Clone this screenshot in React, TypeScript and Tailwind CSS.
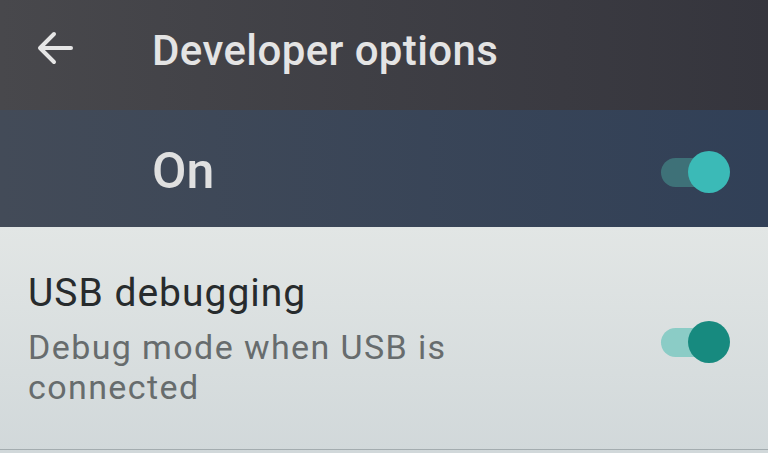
function Toggle({ track, thumb }: { track: string; thumb: string }) {
  return (
    <div className="relative w-[70px] h-[42px] flex items-center">
      <div className={`ml-[1px] w-[50px] h-[29px] rounded-full ${track}`} />
      <div className={`absolute right-0 top-0 w-[42px] h-[42px] rounded-full ${thumb}`} />
    </div>
  )
}

export default function App() {
  return (
    <div
      className="w-[768px] h-[453px] flex flex-col overflow-hidden bg-[#d9dfdf]"
      style={{ fontFamily: 'Roboto, "Liberation Sans", sans-serif' }}
    >
      {/* toolbar */}
      <header className="h-[110px] shrink-0 flex items-start bg-gradient-to-r from-[#48484c] to-[#35353d]">
        <div className="w-[152px] pl-[37px] pt-[31px]">
          <svg width="36" height="34" viewBox="0 0 36 34" fill="none" stroke="#e6e6e6" strokeWidth="4" strokeLinecap="round" strokeLinejoin="round">
            <path d="M34 17H4" />
            <path d="M17 3L3 17l14 14" />
          </svg>
        </div>
        <h1 className="pt-[26px] text-[42px] leading-[50px] font-medium text-[#e4e4e4] tracking-[0.4px]">
          Developer options
        </h1>
      </header>

      {/* master switch */}
      <div className="h-[117px] shrink-0 flex items-start justify-between pl-[152px] pr-[38px] bg-gradient-to-r from-[#434b58] to-[#314057]">
        <span className="pt-[36px] text-[50px] leading-[50px] font-medium text-[#e0e0e0]">On</span>
        <div className="mt-[41px]">
          <Toggle track="bg-[#3e7178]" thumb="bg-[#3bbab7]" />
        </div>
      </div>

      {/* list */}
      <div className="flex-1 flex flex-col bg-gradient-to-b from-[#e2e6e5] to-[#d1d8da]">
        <div className="flex items-start justify-between pl-[28px] pr-[38px] pt-[42px]">
          <div className="flex flex-col">
            <span className="text-[39px] leading-[48px] text-[#272b2d] tracking-[1px]">USB debugging</span>
            <span className="mt-[10px] text-[34px] leading-[40px] text-[#676c6d] tracking-[1.4px] w-[450px]">
              Debug mode when USB is connected
            </span>
          </div>
          <div className="mt-[52px]">
            <Toggle track="bg-[#8bccc6]" thumb="bg-[#178a7f]" />
          </div>
        </div>
        <div className="mt-auto mb-[3px] h-[1px] bg-[#a3acaf]" />
      </div>
    </div>
  )
}
